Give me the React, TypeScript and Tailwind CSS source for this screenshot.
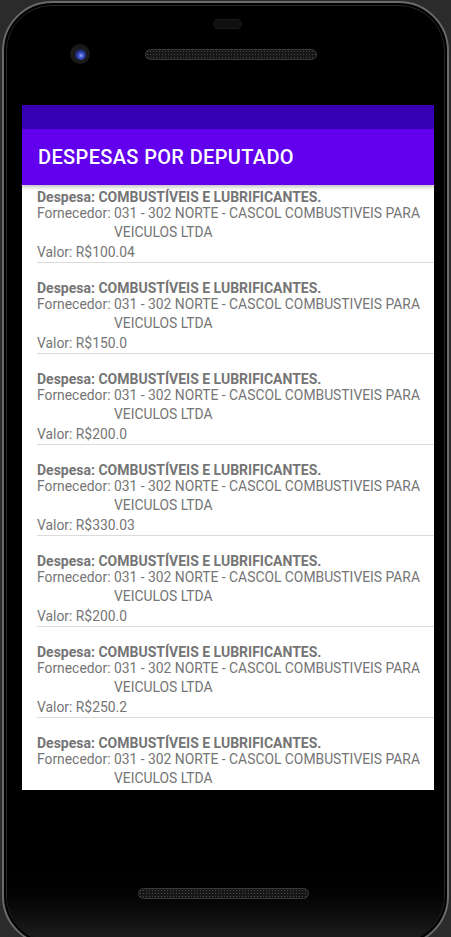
import React from "react";

const items: (string | null)[] = [
  "100.04",
  "150.0",
  "200.0",
  "330.03",
  "200.0",
  "250.2",
  null,
];

function Item({ valor }: { valor: string | null }) {
  return (
    <div className="pl-[15px] text-[#757575]">
      <div className="pt-[5px] text-[14px] leading-[14px] font-bold whitespace-nowrap">
        Despesa: COMBUSTÍVEIS E LUBRIFICANTES.
      </div>
      <div className="flex text-[13.86px] leading-[19px] pr-[6px]">
        <span className="shrink-0 whitespace-pre">Fornecedor: </span>
        <span className="flex-1 min-w-0">
          031 - 302 NORTE - CASCOL COMBUSTIVEIS PARA VEICULOS LTDA
        </span>
      </div>
      {valor !== null && (
        <>
          <div className="mt-[1px] text-[13.86px] leading-[19px]">Valor: R${valor}</div>
          <div className="h-px bg-[#dcdcdc]" />
          <div className="h-[13px]" />
        </>
      )}
    </div>
  );
}

export default function App() {
  return (
    <div
      className="w-[451px] h-[937px] overflow-hidden bg-[#2b2b2b] pl-[2px] pt-[1px]"
      style={{ fontFamily: "Roboto, 'Noto Sans', sans-serif" }}
    >
      <div className="w-[447px] h-[945px] rounded-[50px] border-2 border-[#6a6a6a] bg-black p-[2px]">
        <div className="h-full rounded-[46px] border border-[#262626] bg-black flex flex-col overflow-hidden">
          {/* top hardware */}
          <div className="h-[99px] shrink-0 flex flex-col">
            <div className="mt-[13px] ml-[206px] w-[29px] h-[10px] rounded-full bg-[#0f0f0f] border border-[#1c1c1c]" />
            <div className="mt-[15px] flex items-center">
              <div className="ml-[63px] w-[20px] h-[20px] rounded-full bg-[#1a1a1a] flex items-center justify-center">
                <div className="w-[11px] h-[11px] rounded-full bg-[radial-gradient(circle_at_55%_60%,#8fa0ff_0,#3245b8_35%,#141a4a_75%)]" />
              </div>
              <div className="ml-[55px] w-[172px] h-[11px] rounded-full border border-[#3a3a3a] bg-[#161616] bg-[radial-gradient(circle,#4a4a4a_0.7px,transparent_1px)] bg-[length:3px_3px]" />
            </div>
          </div>
          {/* screen */}
          <div className="ml-[15px] w-[412px] h-[685px] shrink-0 bg-white flex flex-col overflow-hidden">
            <div className="h-[24px] shrink-0 bg-[#3700b3]" />
            <div className="h-[56px] shrink-0 bg-[#6200ee] flex items-center pl-[16px] relative z-10 shadow-[0_2px_4px_rgba(0,0,0,0.25)]">
              <span className="text-white text-[20px] font-medium tracking-[0.35px]">
                DESPESAS POR DEPUTADO
              </span>
            </div>
            <div className="flex-1 overflow-hidden">
              {items.map((v, i) => (
                <Item key={i} valor={v} />
              ))}
            </div>
          </div>
          {/* bottom */}
          <div className="flex-1 flex flex-col items-center bg-gradient-to-b from-black from-[45%] to-[#1f1f1f]">
            <div className="mt-[98px] ml-[-4px] w-[171px] h-[11px] rounded-full border border-[#3a3a3a] bg-[#161616] bg-[radial-gradient(circle,#4a4a4a_0.7px,transparent_1px)] bg-[length:3px_3px]" />
          </div>
        </div>
      </div>
    </div>
  );
}
